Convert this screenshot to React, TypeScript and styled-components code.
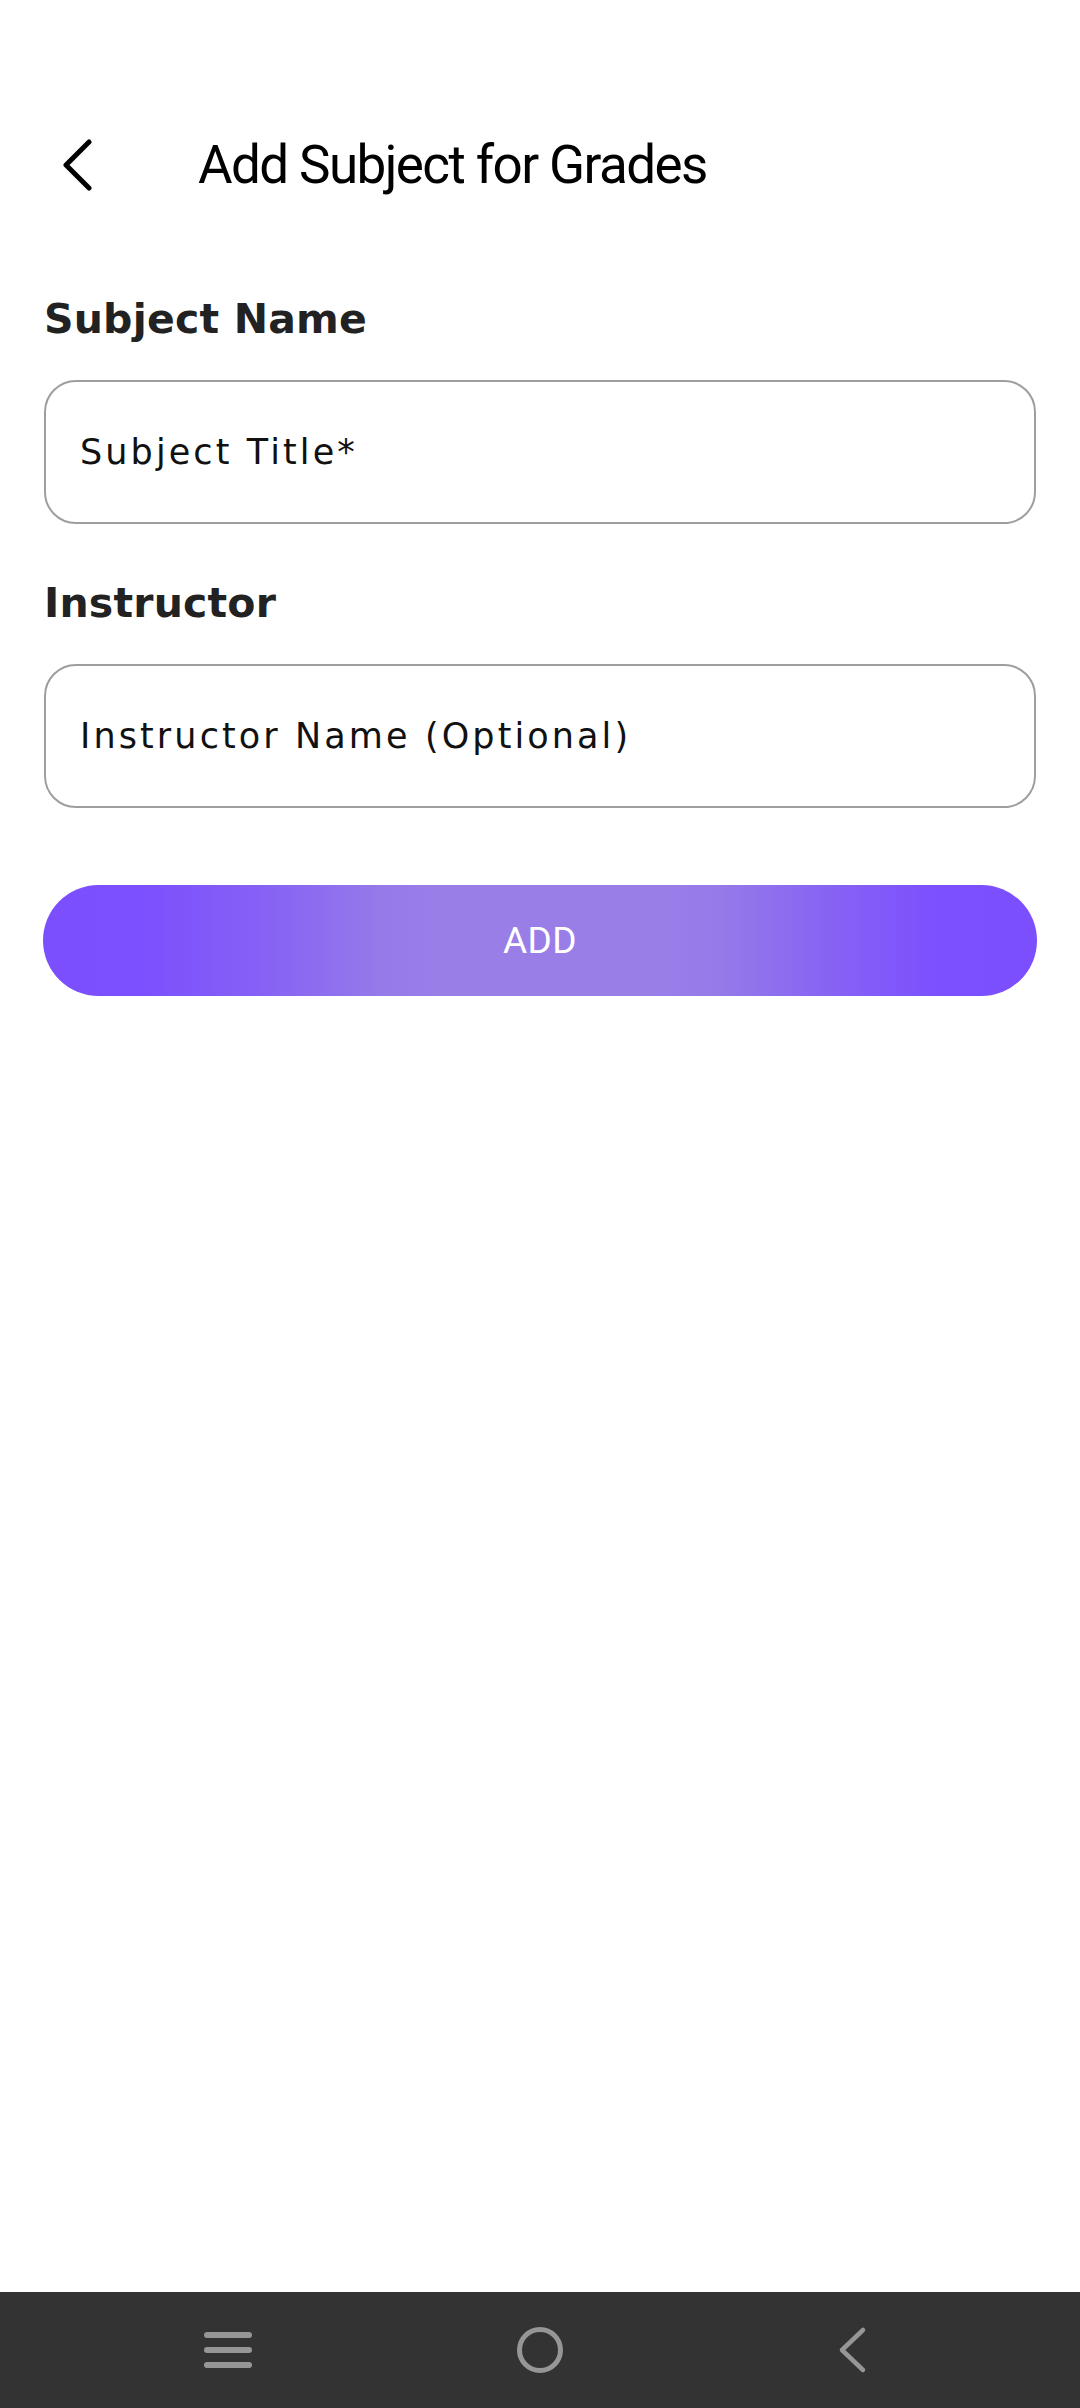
import React from "react";
import styled, { createGlobalStyle } from "styled-components";

const Global = createGlobalStyle`
  html, body { margin: 0; padding: 0; background: #ffffff; }
  #root { width: 1080px; }
  * { box-sizing: border-box; }
`;

const Screen = styled.div`
  width: 1080px;
  height: 2408px;
  display: flex;
  flex-direction: column;
  background: #ffffff;
`;

const Content = styled.main`
  flex: 1;
  display: flex;
  flex-direction: column;
  padding: 115px 44px 0 44px;
`;

const Header = styled.header`
  height: 100px;
  display: flex;
  align-items: center;
  padding-left: 18px;
  gap: 106px;
`;

const BackButton = styled.button`
  border: none;
  background: none;
  padding: 0;
  width: 30px;
  height: 52px;
  display: flex;
  align-items: center;
  justify-content: center;
`;

const Title = styled.h1`
  margin: 0;
  font-family: Roboto, "Liberation Sans", sans-serif;
  font-weight: 400;
  font-size: 53px;
  letter-spacing: -1.6px;
  color: #000;
  line-height: 1;
`;

const Label = styled.label<{ $top: number }>`
  display: block;
  margin-top: ${(p) => p.$top}px;
  font-family: "DejaVu Sans", Inter, sans-serif;
  font-weight: 700;
  font-size: 41px;
  line-height: 50px;
  letter-spacing: 0.2px;
  color: #222222;
`;

const Field = styled.div`
  margin-top: 36px;
  height: 144px;
  border: 2px solid #9e9e9e;
  border-radius: 32px;
  display: flex;
  align-items: center;
  padding: 0 34px;
`;

const FieldText = styled.span`
  font-family: "DejaVu Sans", "Open Sans", sans-serif;
  font-size: 35px;
  letter-spacing: 3.1px;
  color: #111111;
`;

const AddButton = styled.button`
  margin-top: 77px;
  height: 111px;
  width: 994px;
  margin-left: -1px;
  border: none;
  border-radius: 56px;
  background: linear-gradient(
    90deg,
    #7b4ffe 0%,
    #7c50fe 10%,
    #8661f5 22%,
    #957ae9 34%,
    #9a7ee8 40%,
    #9a7ee8 62%,
    #957ae9 68%,
    #8661f5 80%,
    #7c50fe 90%,
    #7b4ffe 100%
  );
  color: #ffffff;
  font-family: Roboto, "Liberation Sans", sans-serif;
  font-size: 37px;
  font-weight: 400;
  letter-spacing: 0.5px;
  display: flex;
  align-items: center;
  justify-content: center;
`;

const NavBar = styled.nav`
  height: 116px;
  background: #333333;
  display: grid;
  grid-template-columns: repeat(3, 1fr);
  align-items: center;
  justify-items: center;
  padding: 0 72px;
`;

const NavIcon = styled.div`
  width: 60px;
  height: 60px;
  display: flex;
  align-items: center;
  justify-content: center;
`;

export default function App() {
  return (
    <>
      <Global />
      <Screen>
        <Content>
          <Header>
            <BackButton aria-label="Back">
              <svg width="30" height="52" viewBox="0 0 30 52">
                <path
                  d="M27 3 L4 26 L27 49"
                  fill="none"
                  stroke="#000"
                  strokeWidth="5"
                  strokeLinecap="round"
                  strokeLinejoin="round"
                />
              </svg>
            </BackButton>
            <Title>Add Subject for Grades</Title>
          </Header>
          <Label $top={79}>Subject Name</Label>
          <Field>
            <FieldText>Subject Title*</FieldText>
          </Field>
          <Label $top={54}>Instructor</Label>
          <Field>
            <FieldText>Instructor Name (Optional)</FieldText>
          </Field>
          <AddButton>ADD</AddButton>
        </Content>
        <NavBar>
          <NavIcon>
            <svg width="48" height="40" viewBox="0 0 48 40">
              <g stroke="#969696" strokeWidth="6" strokeLinecap="round">
                <line x1="3" y1="5" x2="45" y2="5" />
                <line x1="3" y1="20" x2="45" y2="20" />
                <line x1="3" y1="35" x2="45" y2="35" />
              </g>
            </svg>
          </NavIcon>
          <NavIcon>
            <svg width="50" height="50" viewBox="0 0 50 50">
              <circle cx="25" cy="25" r="20.5" fill="none" stroke="#969696" strokeWidth="5" />
            </svg>
          </NavIcon>
          <NavIcon>
            <svg width="30" height="48" viewBox="0 0 30 48">
              <path
                d="M26 4 L5 24 L26 44"
                fill="none"
                stroke="#969696"
                strokeWidth="4.5"
                strokeLinecap="round"
                strokeLinejoin="round"
              />
            </svg>
          </NavIcon>
        </NavBar>
      </Screen>
    </>
  );
}
